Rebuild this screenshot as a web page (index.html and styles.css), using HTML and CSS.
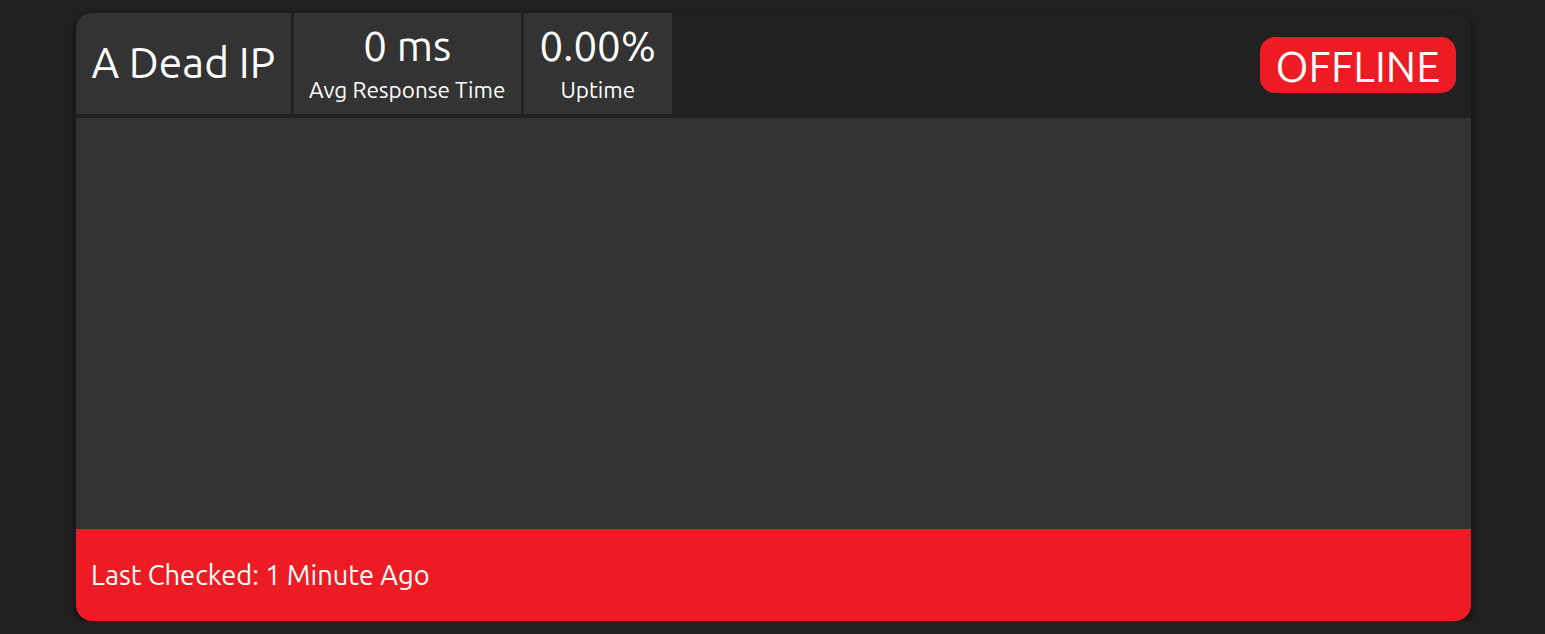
FILE: index.html
```html
<!DOCTYPE html>
<html>
<head>
<meta charset="utf-8">
<link rel="stylesheet" href="styles.css">
</head>
<body>
<div class="card">
  <div class="header">
    <div class="box name">A Dead IP</div>
    <div class="box stat">
      <div class="value">0 ms</div>
      <div class="label">Avg Response Time</div>
    </div>
    <div class="box stat">
      <div class="value">0.00%</div>
      <div class="label">Uptime</div>
    </div>
    <div class="spacer"></div>
    <div class="status">OFFLINE</div>
  </div>
  <div class="chart"></div>
  <div class="footer">Last Checked: 1 Minute Ago</div>
</div>
</body>
</html>
```
FILE: styles.css
```css
html, body {
  margin: 0;
  padding: 0;
  background: #212121;
  font-family: "Ubuntu", "Noto Sans", "Open Sans", sans-serif;
  color: #fff;
}
.card {
  width: 1395px;
  margin: 13px 0 0 76px;
  background: #212121;
  border-radius: 16px;
  overflow: hidden;
  box-shadow: 0 3px 10px rgba(0, 0, 0, 0.55);
}
.header {
  display: flex;
  align-items: stretch;
  gap: 3px;
  height: 101px;
  padding-bottom: 4px;
}
.box {
  background: #333;
  padding: 0 15.5px;
  display: flex;
  flex-direction: column;
  justify-content: center;
  align-items: center;
}
.name {
  font-size: 42.5px;
  padding-bottom: 4px;
}
.stat .value {
  font-size: 42px;
  line-height: 52px;
}
.stat .label {
  font-size: 22.5px;
  line-height: 35px;
}
.spacer { flex: 1; }
.status {
  align-self: center;
  background: #ed1c24;
  border-radius: 15px;
  font-size: 42.5px;
  line-height: 54px;
  padding: 2px 16px 0;
  margin-right: 15px;
  margin-top: 3px;
}
.chart {
  background: #333;
  height: 411px;
}
.footer {
  background: #ed1c24;
  height: 92px;
  display: flex;
  align-items: center;
  padding-left: 15px;
  font-size: 27.3px;
}
```
